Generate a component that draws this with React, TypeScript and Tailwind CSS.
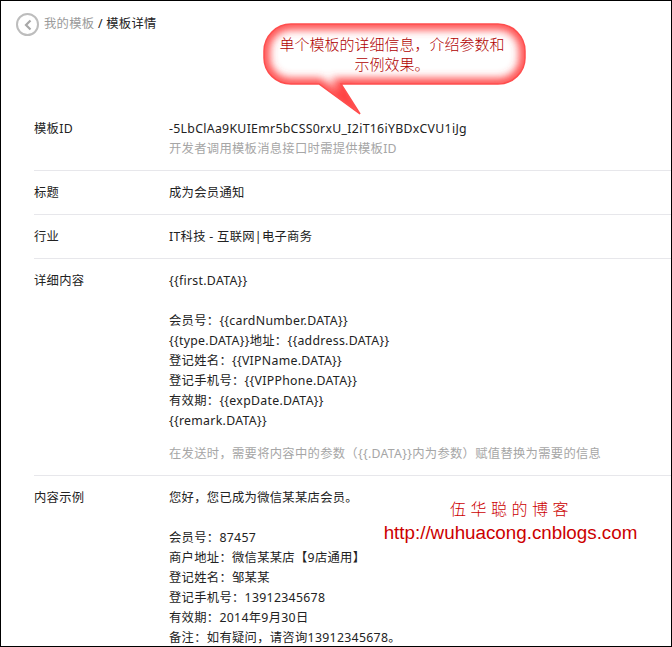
import React from 'react';

const FONT = "font-['Noto_Sans','Noto_Sans_CJK_SC',sans-serif]";
const BUBBLE =
  'M29 2H236A27 27 0 0 1 263 29V36A27 26 0 0 1 236 62H79L98 92L57 62H29A27 26 0 0 1 2 36V29A27 27 0 0 1 29 2Z';

const Row: React.FC<{ label: string; children: React.ReactNode }> = ({ label, children }) => (
  <div className="ml-[33px] flex border-b border-[#e7e7eb] pt-3 pb-[11px] last:border-b-0">
    <div className="w-[135px] shrink-0">{label}</div>
    <div className="min-w-0 flex-1">{children}</div>
  </div>
);

const App: React.FC = () => {
  return (
    <div className={`relative h-[647px] w-[672px] overflow-hidden border border-black bg-white text-[12.3px] leading-5 tracking-[0.3px] text-[#222222] ${FONT}`}>
      {/* Breadcrumb */}
      <div className="flex h-[106px] items-start gap-[5px] pt-[12px] pl-[15px]">
        <div className="flex h-[23px] w-[23px] items-center justify-center rounded-full border-2 border-[#bdbdbd]">
          <svg width="10" height="12" viewBox="0 0 10 12" fill="none" stroke="#a8a8a8" strokeWidth="2.2">
            <path d="M7.5 1.5 3 6l4.5 4.5" />
          </svg>
        </div>
        <div className="pt-[1px]">
          <span className="text-[#9a9a9a]">我的模板</span>
          <span> / 模板详情</span>
        </div>
      </div>

      <Row label="模板ID">
        <div>-5LbClAa9KUIEmr5bCSS0rxU_I2iT16iYBDxCVU1iJg</div>
        <div className="text-[#a6a6a6]">开发者调用模板消息接口时需提供模板ID</div>
      </Row>
      <Row label="标题">成为会员通知</Row>
      <Row label="行业">IT科技 - 互联网|电子商务</Row>
      <Row label="详细内容">
        <div>{'{{first.DATA}}'}</div>
        <div className="h-5" />
        <div>会员号：{'{{cardNumber.DATA}}'}</div>
        <div>{'{{type.DATA}}'}地址：{'{{address.DATA}}'}</div>
        <div>登记姓名：{'{{VIPName.DATA}}'}</div>
        <div>登记手机号：{'{{VIPPhone.DATA}}'}</div>
        <div>有效期：{'{{expDate.DATA}}'}</div>
        <div>{'{{remark.DATA}}'}</div>
        <div className="mt-[13px] text-[#a6a6a6]">在发送时，需要将内容中的参数（{'{{.DATA}}'}内为参数）赋值替换为需要的信息</div>
      </Row>
      <Row label="内容示例">
        <div>您好，您已成为微信某某店会员。</div>
        <div className="h-5" />
        <div>会员号：87457</div>
        <div>商户地址：微信某某店【9店通用】</div>
        <div>登记姓名：邹某某</div>
        <div>登记手机号：13912345678</div>
        <div>有效期：2014年9月30日</div>
        <div>备注：如有疑问，请咨询13912345678。</div>
      </Row>

      {/* Annotation callout */}
      <div className="absolute top-[21px] left-[261px] h-[96px] w-[268px] tracking-normal">
        <svg width="268" height="96" viewBox="0 0 268 96" className="absolute inset-0">
          <defs>
            <filter id="glow" x="-10%" y="-20%" width="120%" height="140%">
              <feGaussianBlur stdDeviation="4.5" />
            </filter>
            <clipPath id="bubble">
              <path d={BUBBLE} />
            </clipPath>
          </defs>
          <path d={BUBBLE} fill="#ffffff" />
          <g clipPath="url(#bubble)">
            <path d={BUBBLE} fill="none" stroke="#ff4040" strokeWidth="11" filter="url(#glow)" />
          </g>
          <path d={BUBBLE} fill="none" stroke="#ff4d4d" strokeWidth="1.5" />
        </svg>
        <div className="absolute top-[12px] left-[15px] w-[230px] text-center text-[15px] leading-5 font-light text-[#b00000]">
          单个模板的详细信息，介绍参数和示例效果。
        </div>
      </div>

      {/* Watermark */}
      <div className="absolute top-[496px] left-[381px] w-[257px] text-center tracking-normal text-[#cc0000]">
        <div className="pl-[2px] font-['Noto_Sans_CJK_SC',serif] text-[16px] leading-[22px] font-extralight tracking-[4.5px]">伍华聪的博客</div>
        <div className="mt-[3px] font-['Liberation_Sans',sans-serif] text-[18.8px] leading-[22px]">http://wuhuacong.cnblogs.com</div>
      </div>
    </div>
  );
};

export default App;
